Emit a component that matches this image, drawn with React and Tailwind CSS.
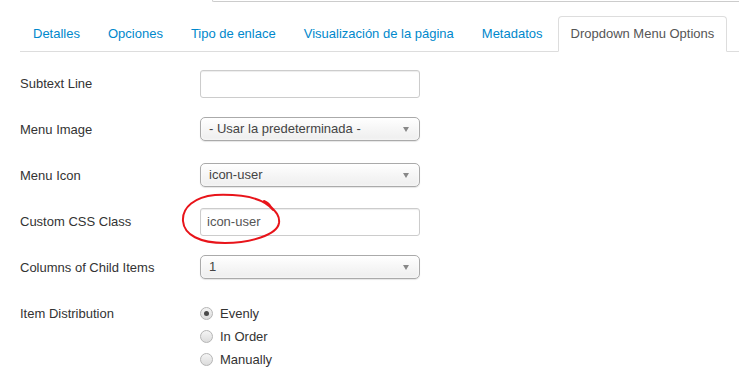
import { useState } from 'react';

const tabs = [
  'Detalles',
  'Opciones',
  'Tipo de enlace',
  'Visualización de la página',
  'Metadatos',
  'Dropdown Menu Options',
];

function Tabs({ active }) {
  return (
    <ul className="flex border-b border-[#ddd] mt-[14px]">
      {tabs.map((t) => (
        <li key={t} className="-mb-px mr-[2px]">
          <span
            className={`block px-[12px] py-[8px] leading-[18px] border rounded-t-[4px] whitespace-nowrap ${
              t === active
                ? 'bg-white border-[#ddd] border-b-white text-[#555]'
                : 'border-transparent text-[#0088cc]'
            }`}
          >
            {t}
          </span>
        </li>
      ))}
    </ul>
  );
}

function Select({ value }) {
  return (
    <div className="relative w-[220px] h-[24px] mt-[1px] border border-[#aaa] rounded-[5px] bg-gradient-to-b from-white via-[#f6f6f6] to-[#eee] shadow-[0_0_3px_#fff_inset,0_1px_1px_rgba(0,0,0,0.1)] text-[#444] leading-[22px] pl-[8px]">
      {value}
      <span className="absolute right-[10px] top-[9px] w-0 h-0 border-l-[3.5px] border-r-[3.5px] border-t-[5px] border-l-transparent border-r-transparent border-t-[#888]" />
    </div>
  );
}

function TextInput({ value }) {
  return (
    <div className="w-[220px] h-[28px] border border-[#ccc] rounded-[3px] shadow-[inset_0_1px_1px_rgba(0,0,0,0.075)] px-[6px] leading-[26px] text-[#555] bg-white">
      {value}
    </div>
  );
}

function Radio({ checked, label }) {
  return (
    <div className="flex items-center h-[23px]">
      <span className="w-[13px] h-[13px] rounded-full border border-[#b5b5b5] bg-gradient-to-b from-[#f4f4f4] to-[#dcdcdc] flex items-center justify-center">
        {checked && <span className="w-[5px] h-[5px] rounded-full bg-[#4a4a4a]" />}
      </span>
      <span className="ml-[7px] text-[#333]">{label}</span>
    </div>
  );
}

function Row({ label, children }) {
  return (
    <div className="flex h-[28px] mb-[18px]">
      <div className="w-[180px] shrink-0 pt-[5px] leading-[18px] text-[#333]">{label}</div>
      <div>{children}</div>
    </div>
  );
}

export default function App() {
  const [active] = useState('Dropdown Menu Options');
  return (
    <div className="relative w-[739px] h-[368px] overflow-hidden bg-white font-['Liberation_Sans',Arial,sans-serif] text-[13px]">
      <div className="ml-[212px] h-[2px] border-l border-b border-[#ccc] rounded-bl-[3px]" />
      <div className="pl-[20px]">
        <Tabs active={active} />
        <div className="mt-[18px]">
          <Row label="Subtext Line">
            <TextInput value="" />
          </Row>
          <Row label="Menu Image">
            <Select value="- Usar la predeterminada -" />
          </Row>
          <Row label="Menu Icon">
            <Select value="icon-user" />
          </Row>
          <Row label="Custom CSS Class">
            <TextInput value="icon-user" />
          </Row>
          <Row label="Columns of Child Items">
            <Select value="1" />
          </Row>
          <div className="flex">
            <div className="w-[180px] shrink-0 pt-[5px] leading-[18px] text-[#333]">Item Distribution</div>
            <div className="pt-[2px]">
              <Radio checked label="Evenly" />
              <Radio label="In Order" />
              <Radio label="Manually" />
            </div>
          </div>
        </div>
      </div>
      {/* red annotation round the custom class field */}
      <svg
        className="absolute left-[180px] top-[193px] pointer-events-none"
        width="104"
        height="56"
        viewBox="0 0 104 56"
        fill="none"
      >
        <path
          d="M93 17 C84 5 62 1 35 2 C15 4 2 14 3 28 C4 42 20 50 45 50 C70 50 97 42 99 30 C100 23 96 19 91 14 C89 11 87 9 84 8"
          stroke="#e8141a"
          strokeWidth="2"
          strokeLinecap="round"
        />
      </svg>
    </div>
  );
}
